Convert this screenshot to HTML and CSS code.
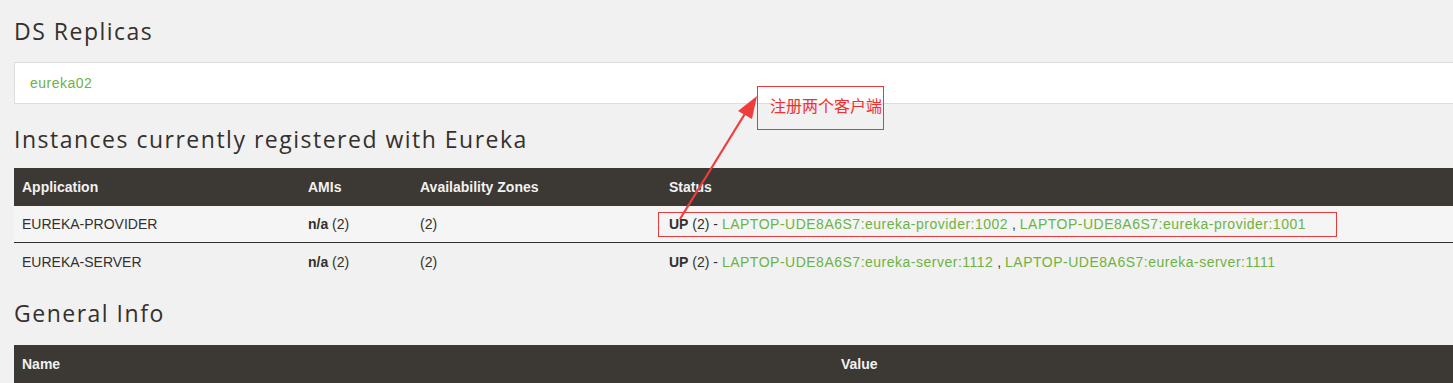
FILE: index.html
```html
<!DOCTYPE html>
<html lang="en">
<head>
<meta charset="utf-8">
<title>Eureka</title>
<link rel="stylesheet" href="styles.css">
</head>
<body>
<div class="page">
  <h2 class="heading first">DS Replicas</h2>
  <ul class="replicas">
    <li><a class="link" href="#">eureka02</a></li>
  </ul>

  <h2 class="heading">Instances currently registered with Eureka</h2>
  <table class="tbl instances">
    <thead>
      <tr>
        <th class="c-app">Application</th>
        <th class="c-ami">AMIs</th>
        <th class="c-az">Availability Zones</th>
        <th>Status</th>
      </tr>
    </thead>
    <tbody>
      <tr class="odd">
        <td><b class="app">EUREKA-PROVIDER</b></td>
        <td><b>n/a</b> (2)</td>
        <td>(2)</td>
        <td><b>UP</b> (2) - <a class="link" href="#">LAPTOP-UDE8A6S7:eureka-provider:1002</a> , <a class="link" href="#">LAPTOP-UDE8A6S7:eureka-provider:1001</a></td>
      </tr>
      <tr class="even">
        <td><b class="app">EUREKA-SERVER</b></td>
        <td><b>n/a</b> (2)</td>
        <td>(2)</td>
        <td><b>UP</b> (2) - <a class="link" href="#">LAPTOP-UDE8A6S7:eureka-server:1112</a> , <a class="link" href="#">LAPTOP-UDE8A6S7:eureka-server:1111</a></td>
      </tr>
    </tbody>
  </table>

  <h2 class="heading gi">General Info</h2>
  <table class="tbl general">
    <thead>
      <tr>
        <th class="c-name">Name</th>
        <th>Value</th>
      </tr>
    </thead>
  </table>
</div>

<div class="note">注册两个客户端</div>
<div class="mark"></div>
<svg class="arrow" width="1453" height="383" viewBox="0 0 1453 383">
  <line x1="680" y1="219" x2="746" y2="112" stroke="#f03c3c" stroke-width="2.2"/>
  <polygon points="757,96 738,111 752,119" fill="#f03c3c"/>
</svg>
</body>
</html>
```
FILE: styles.css
```css
html, body {
  margin: 0;
  padding: 0;
}
body {
  background: #f1f1f1;
  color: #34302d;
  font-family: "Liberation Sans", Arial, sans-serif;
  font-size: 14px;
  overflow: hidden;
  width: 1453px;
  height: 383px;
  position: relative;
}
.page {
  padding-left: 14px;
  width: 1460px;
}
.heading {
  font-family: "Open Sans", "Liberation Sans", sans-serif;
  font-weight: 500;
  font-size: 23px;
  line-height: 30px;
  height: 30px;
  margin: 0;
  letter-spacing: 1.5px;
  color: #34302d;
}
.heading.first {
  padding-top: 16px;
}
.replicas {
  list-style: none;
  margin: 16px 0 0 0;
  padding: 0 15px;
  height: 40px;
  background: #fff;
  border: 1px solid #dddddd;
  display: flex;
  align-items: center;
}
.link {
  color: #6db33f;
  text-decoration: none;
  letter-spacing: 0.5px;
}
.replicas .link {
  font-size: 14px;
}
.heading:not(.first) {
  margin-top: 20px;
}
.tbl {
  border-collapse: collapse;
  width: 1460px;
  margin-top: 14px;
  table-layout: fixed;
}
.tbl th {
  background: #3c3834;
  color: #f1f1f1;
  font-weight: bold;
  text-align: left;
  height: 38px;
  padding: 0 8px;
  font-size: 14px;
  box-sizing: border-box;
}
.tbl td {
  padding: 0 8px;
  white-space: nowrap;
  font-size: 14px;
}
.c-app { width: 286px; }
.c-ami { width: 112px; }
.c-az { width: 249px; }
.c-name { width: 819px; }
.app { font-weight: normal; }
.odd td {
  background: #f5f5f5;
  height: 36px;
  border-bottom: 1px solid #34302d;
}
.even td {
  height: 37px;
}
.heading.gi {
  margin-top: 18px;
}
.general {
  margin-top: 17px;
}
.note {
  position: absolute;
  left: 757px;
  top: 86px;
  width: 127px;
  height: 44px;
  box-sizing: border-box;
  border: 1px solid #e8393b;
  color: #f03030;
  font-family: "Noto Sans CJK SC", sans-serif;
  font-size: 16px;
  line-height: 20px;
  padding: 8px 0 0 12px;
  white-space: nowrap;
}
.mark {
  position: absolute;
  left: 658px;
  top: 212px;
  width: 679px;
  height: 25px;
  box-sizing: border-box;
  border: 1px solid #e8393b;
}
.arrow {
  position: absolute;
  left: 0;
  top: 0;
  pointer-events: none;
}
```
